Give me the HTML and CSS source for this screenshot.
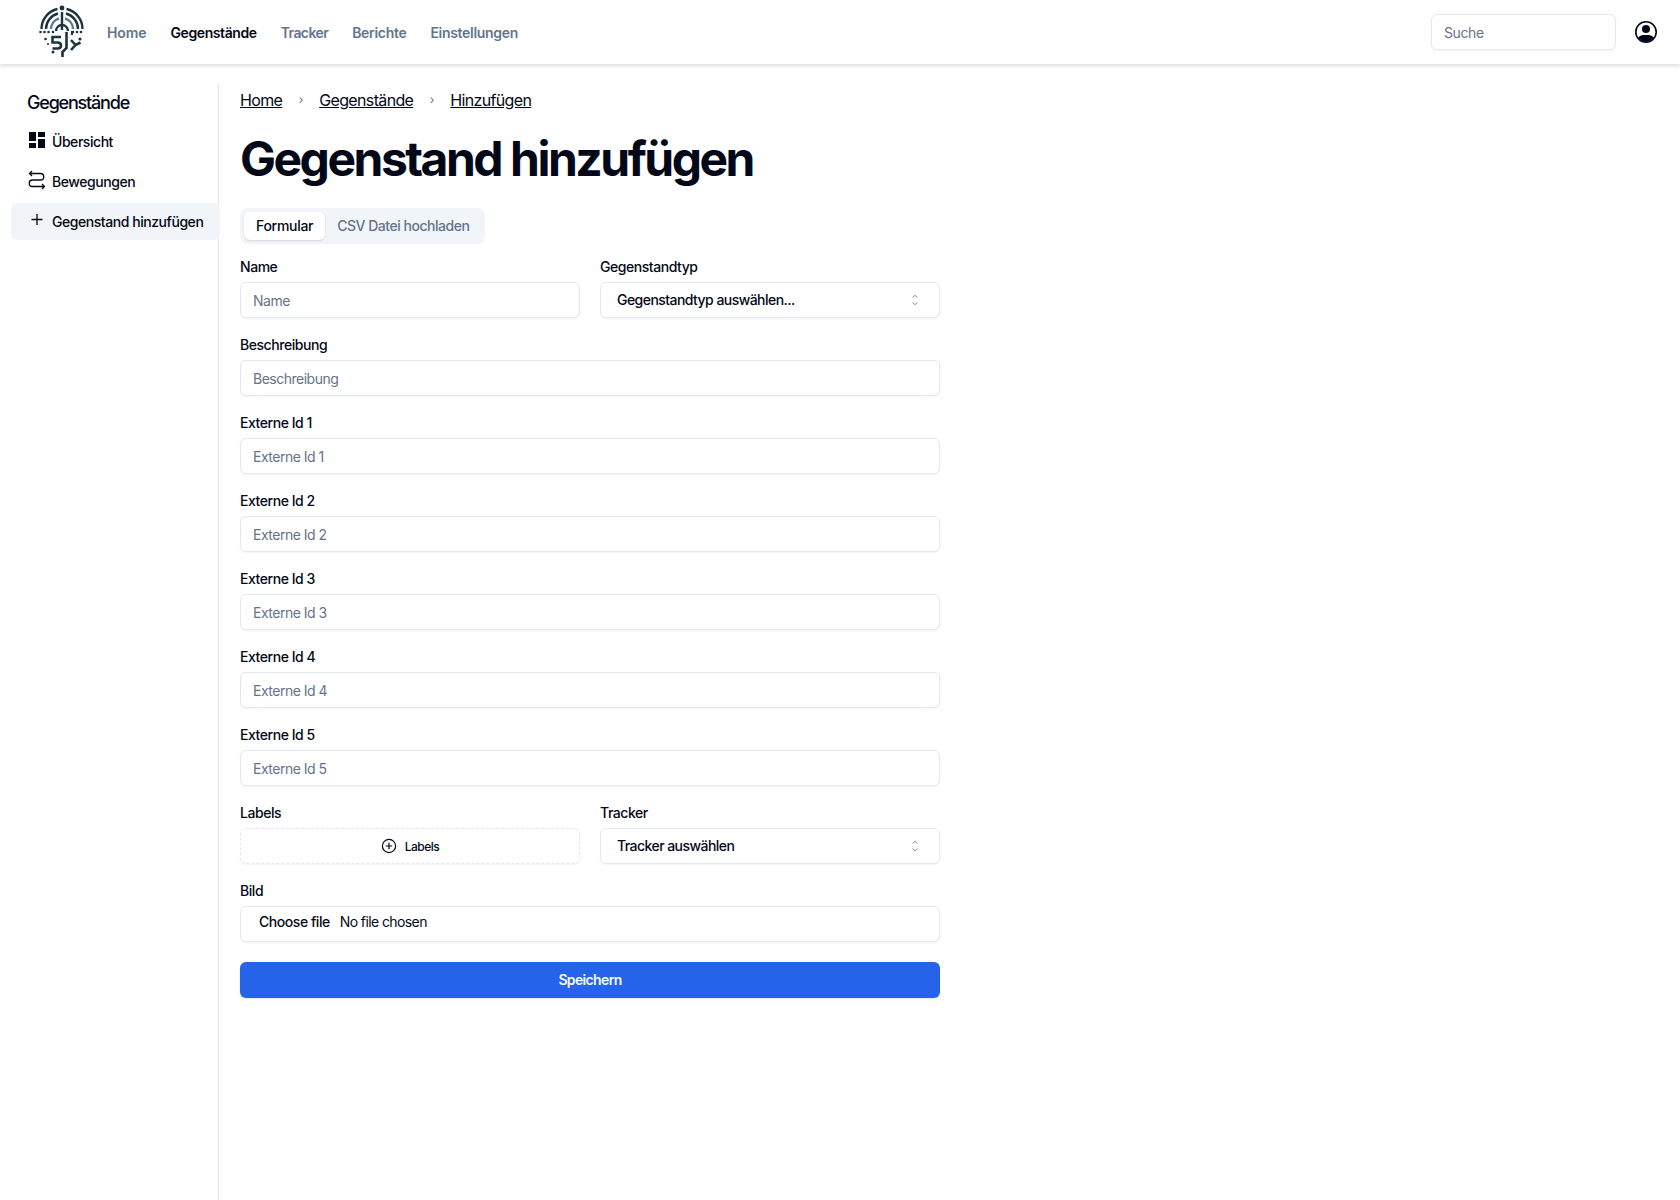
FILE: index.html
```html
<!DOCTYPE html>
<html lang="de">
<head>
<meta charset="utf-8">
<title>Gegenstand hinzufügen</title>
<link rel="stylesheet" href="styles.css">
</head>
<body>
<header class="topbar">
  <div class="logo">
    <svg width="46" height="54" viewBox="38 5 46 54" fill="none" stroke="#1c3442" stroke-width="2.400">
      <circle cx="61" cy="8" r="2.400" fill="#1c3442" stroke="none"/>
      <path d="M40.500 29a20.500 20.500 0 0 1 16-20M65.500 9a20.500 20.500 0 0 1 16 20"/>
      <path d="M45 29a16 16 0 0 1 12-15.500M65 13.500a16 16 0 0 1 12 15.500"/>
      <path d="M50 29a11 11 0 0 1 8-10.500M64 18.500a11 11 0 0 1 8 10.500" stroke="#5f7b89"/>
      <path d="M55 31a6 6 0 0 1 12 0M61 12v18"/>
      <path d="M60 37h-8.500v5.500h5q3.500 0 3.500 3t-3.500 3h-5" stroke-width="2.600"/>
      <path d="M65.500 32v16l-4 4v5" stroke-width="2.600"/>
      <path d="M70 40l4.500 5-4.500 5M74.500 45l5-2.500" stroke-width="2.600"/>
      <path d="M71 31v4" stroke-width="2"/>
      <g fill="#1c3442" stroke="none">
        <circle cx="39.500" cy="32" r="1.300"/><circle cx="43.500" cy="32" r="1.300"/><circle cx="47.500" cy="32" r="1.300"/><circle cx="52" cy="32" r="1.300"/>
        <circle cx="72" cy="32" r="1.300"/><circle cx="76" cy="32" r="1.300"/><circle cx="80" cy="32" r="1.300"/>
        <circle cx="44.500" cy="39" r="1.300"/><circle cx="79" cy="39" r="1.600"/><circle cx="52" cy="52" r="1.500"/><circle cx="47" cy="44" r="1"/>
      </g>
    </svg>
  </div>
  <nav class="mainnav">
    <a class="navlink first">Home</a>
    <a class="navlink active">Gegenstände</a>
    <a class="navlink tight">Tracker</a>
    <a class="navlink">Berichte</a>
    <a class="navlink">Einstellungen</a>
  </nav>
  <div class="topright">
    <input class="search" placeholder="Suche">
    <svg width="24" height="24" viewBox="0 0 24 24" class="user">
      <circle cx="12" cy="12" r="10.200" fill="none" stroke="#020817" stroke-width="1.600"/>
      <circle cx="12" cy="9" r="4" fill="#020817"/>
      <path d="M4.200 17.500Q6 15 9 15h6q3 0 4.800 2.500A10 10 0 0 1 12 22a10 10 0 0 1-7.800-4.500z" fill="#020817"/>
    </svg>
  </div>
</header>
<div class="shell">
  <aside class="sidebar">
    <h2 class="sidetitle">Gegenstände</h2>
    <a class="sideitem">
      <svg width="18" height="18" viewBox="0 0 18 18" fill="#020817"><path d="M1 1h7v9H1zM10 1h7v5h-7zM10 8h7v9h-7zM1 12h7v5H1z"/></svg>
      <span>Übersicht</span>
    </a>
    <a class="sideitem">
      <svg width="18" height="20" viewBox="0 0 18 20" fill="none" stroke="#020817" stroke-width="1.300"><path d="M4 1L1.500 3.500 4 6M1.500 3.500h11a3.250 3.250 0 0 1 0 6.500H4.500a3.250 3.250 0 0 0 0 6.500h12M14 14l2.500 2.500L14 19"/></svg>
      <span>Bewegungen</span>
    </a>
    <a class="sideitem current">
      <svg width="18" height="18" viewBox="0 0 18 18" fill="none" stroke="#020817" stroke-width="1.300"><path d="M9 3v11M3.500 8.500h11"/></svg>
      <span>Gegenstand hinzufügen</span>
    </a>
  </aside>
  <main class="content">
    <div class="crumbs">
      <a>Home</a><span class="sep">›</span><a>Gegenstände</a><span class="sep">›</span><a>Hinzufügen</a>
    </div>
    <h1>Gegenstand hinzufügen</h1>
    <div class="tabs">
      <span class="tab on">Formular</span>
      <span class="tab off">CSV Datei hochladen</span>
    </div>
    <form class="form">
      <div class="cols">
        <label class="field"><span class="lbl">Name</span><input class="inp" placeholder="Name"></label>
        <div class="field"><span class="lbl">Gegenstandtyp</span>
          <div class="select"><span>Gegenstandtyp auswählen...</span>
            <svg width="12" height="12" viewBox="0 0 12 12" fill="none" stroke="#7a8594" stroke-width="1"><path d="M3.800 3.500L6 1.200l2.200 2.300M3.800 8.500L6 10.800l2.200-2.300"/></svg>
          </div>
        </div>
      </div>
      <label class="field"><span class="lbl">Beschreibung</span><input class="inp" placeholder="Beschreibung"></label>
      <label class="field"><span class="lbl">Externe Id 1</span><input class="inp" placeholder="Externe Id 1"></label>
      <label class="field"><span class="lbl">Externe Id 2</span><input class="inp" placeholder="Externe Id 2"></label>
      <label class="field"><span class="lbl">Externe Id 3</span><input class="inp" placeholder="Externe Id 3"></label>
      <label class="field"><span class="lbl">Externe Id 4</span><input class="inp" placeholder="Externe Id 4"></label>
      <label class="field"><span class="lbl">Externe Id 5</span><input class="inp" placeholder="Externe Id 5"></label>
      <div class="cols">
        <div class="field"><span class="lbl">Labels</span>
          <div class="labels">
            <svg width="16" height="16" viewBox="0 0 16 16" fill="none" stroke="#020817" stroke-width="1.200"><circle cx="8" cy="8" r="6.600"/><path d="M8 4.800v6.400M4.800 8h6.400"/></svg>
            <span>Labels</span>
          </div>
        </div>
        <div class="field"><span class="lbl">Tracker</span>
          <div class="select"><span>Tracker auswählen</span>
            <svg width="12" height="12" viewBox="0 0 12 12" fill="none" stroke="#7a8594" stroke-width="1"><path d="M3.800 3.500L6 1.200l2.200 2.300M3.800 8.500L6 10.800l2.200-2.300"/></svg>
          </div>
        </div>
      </div>
      <div class="field"><span class="lbl">Bild</span>
        <div class="file"><span class="filebtn">Choose file</span><span class="filename">No file chosen</span></div>
      </div>
      <button type="button" class="save">Speichern</button>
    </form>
  </main>
</div>
</body>
</html>
```
FILE: styles.css
```css
* { box-sizing: border-box; }
html, body { margin: 0; height: 100%; }
body { font-family: Inter, "Noto Sans", sans-serif; color: #020817; background: #fff; font-size: 14px; min-height: 1200px; display: flex; flex-direction: column; }
a { color: inherit; }

.topbar { height: 64px; flex: none; display: flex; align-items: center; padding: 0 22px 0 39px; background: #fff; box-shadow: 0 2px 4px rgba(0,0,0,.14); position: relative; z-index: 2; }
.logo { width: 46px; height: 54px; margin-right: 22px; }
.logo svg { display: block; }
.mainnav { display: flex; gap: 24px; }
.navlink { font-size: 14px; font-weight: 600; color: #64748b; line-height: 20px; letter-spacing: -.3px; padding-top: 1px; }
.navlink.first { letter-spacing: -.1px; }
.navlink.tight { letter-spacing: -.6px; }
.navlink.active { color: #020817; letter-spacing: -.4px; }
.topright { margin-left: auto; display: flex; align-items: center; gap: 18px; }
.search { width: 185px; height: 36px; border: 1px solid #e2e8f0; border-radius: 6px; padding: 0 12px; font: 14px Inter, sans-serif; letter-spacing: -.4px; box-shadow: 0 1px 2px rgba(0,0,0,.05); outline: none; }
.search::placeholder, .inp::placeholder { color: #64748b; }
.user { display: block; }

.shell { flex: 1; display: flex; padding-top: 20px; }
.sidebar { width: 219px; flex: none; border-right: 1px solid #e2e8f0; padding: 0 0 0 11px; }
.sidetitle { margin: 1px 0 2px; padding-left: 16px; font-size: 18px; font-weight: 500; line-height: 36px; letter-spacing: -1.200px; }
.sideitem { display: flex; align-items: center; gap: 6px; height: 36px; padding: 0 0 0 17px; margin-bottom: 4px; border-radius: 6px; font-size: 14px; font-weight: 500; letter-spacing: -.45px; }
.sideitem svg { flex: none; margin-top: -3px; }
.sideitem.current { background: #f1f5f9; height: 37px; margin: 1px -2px 0 0; position: relative; }

.content { padding: 0 0 0 21px; width: 721px; }
.crumbs { display: flex; align-items: center; height: 20px; margin-top: 6px; font-size: 16px; line-height: 20px; letter-spacing: -.65px; }
.crumbs a { text-decoration: underline; }
.sep { width: 37px; text-align: center; color: #64748b; font-size: 12px; }
h1 { margin: 19px 0 19px; font-size: 48px; font-weight: 700; line-height: 60px; letter-spacing: -2.500px; }
.tabs { display: inline-flex; height: 36px; padding: 4px; background: #f1f5f9; border-radius: 8px; align-items: stretch; margin-bottom: 13px; vertical-align: top; }
.tab { padding: 0 12px 1px; display: flex; align-items: center; font-weight: 500; font-size: 14px; color: #64748b; border-radius: 6px; letter-spacing: -.3px; }
.tab.off { letter-spacing: -.48px; }
.tab.on { background: #fff; color: #020817; box-shadow: 0 1px 2px rgba(0,0,0,.12); }

.form { display: flex; flex-direction: column; gap: 17px; }
.cols { display: grid; grid-template-columns: 340px 340px; gap: 20px; }
.field { display: flex; flex-direction: column; gap: 5px; }
.lbl { font-size: 14px; font-weight: 500; line-height: 20px; letter-spacing: -.45px; }
.inp, .select, .labels, .file { height: 36px; border: 1px solid #e2e8f0; border-radius: 6px; background: #fff; box-shadow: 0 1px 2px rgba(0,0,0,.05); font: 14px Inter, sans-serif; letter-spacing: -.5px; }
.inp { width: 100%; padding: 0 12px; outline: none; }
.select { display: flex; align-items: center; justify-content: space-between; padding: 0 18px 2px 16px; font-weight: 500; letter-spacing: -.55px; }
.select svg { margin-top: 2px; }
.labels { display: flex; align-items: center; justify-content: center; gap: 8px; border-style: dashed; font-size: 12px; font-weight: 500; letter-spacing: -.5px; }
.file { display: flex; align-items: center; padding: 0 12px 5px; }
.filebtn { padding: 0 10px 0 6px; font-weight: 500; letter-spacing: -.45px; }
.filename { letter-spacing: -.6px; }
.save { height: 36px; margin-top: 3px; padding-bottom: 3px; border: 0; border-radius: 6px; background: #2563eb; color: #f8fafc; font: 600 14px Inter, sans-serif; letter-spacing: -.65px; box-shadow: 0 1px 2px rgba(0,0,0,.1); }
```
